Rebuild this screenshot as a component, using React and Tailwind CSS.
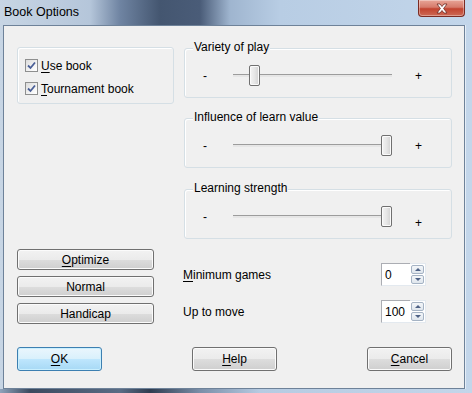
import React from 'react';

const U = ({ children, u }) => (
    <span>
        <span className="underline underline-offset-[2px]">{u}</span>
        {children}
    </span>
);

const Checkbox = ({ u, label }) => (
    <div className="flex items-center h-[13px]">
        <div className="w-[13px] h-[13px] border border-[#8e8f8f] bg-[linear-gradient(135deg,#dcdcdc_0%,#f7f7f7_70%,#ffffff_100%)] flex items-center justify-center">
            <svg width="9" height="9" viewBox="0 0 9 9">
                <path d="M1 4.5 L3.5 7 L8 1.5" fill="none" stroke="#4a5f97" strokeWidth="1.8" />
            </svg>
        </div>
        <span className="ml-[3px] text-[12px] leading-[14px]">
            <U u={u}>{label}</U>
        </span>
    </div>
);

const Slider = ({ title, pct, plusDrop = 0, className = '' }) => (
    <div className={`relative h-[50px] border border-[#d5dfe5] rounded-[3px] shadow-[inset_1px_1px_0_#ffffff] ${className}`}>
        <span className="absolute left-[8px] top-[-9px] px-[1px] bg-[#f0f0f0] text-[12px] leading-[14px]">{title}</span>
        <div className="flex items-center h-[21px] mt-[16px] pl-[18px]">
            <span className="w-[30px] text-[12px] leading-[14px]">-</span>
            <div className="relative w-[159px] h-[21px] flex items-center">
                <div className="w-full h-[3px] border-t border-[#9c9c9c] bg-[#e6e6e6]" />
                <div
                    className="absolute top-0 w-[11px] h-[21px] rounded-[2px] border border-[#707070] bg-[linear-gradient(90deg,#f4f4f4_0%,#e6e6e6_50%,#d2d2d2_100%)] shadow-[inset_0_0_0_1px_#fafafa]"
                    style={{ left: Math.round(pct * 148) }}
                />
            </div>
            <span className="ml-[23px] text-[12px] leading-[14px]" style={{ marginTop: plusDrop }}>+</span>
        </div>
    </div>
);

const Button = ({ children, className = '' }) => (
    <div className={`flex items-center justify-center rounded-[3px] border border-[#707070] bg-[linear-gradient(180deg,#f2f2f2_0%,#ebebeb_50%,#dddddd_51%,#cfcfcf_100%)] shadow-[inset_0_0_0_1px_#fbfbfb] text-[12px] leading-[14px] ${className}`}>
        {children}
    </div>
);

const Spin = ({ value }) => (
    <div className="flex h-[23px]">
        <div className="w-[29px] h-full bg-white border border-[#abadb3] border-r-0 border-b-[#e3e9ef] flex items-center pl-[3px] text-[12px] leading-[14px]">
            {value}
        </div>
        <div className="w-[16px] h-full flex flex-col bg-white border border-[#e3e9ef] border-l-0 p-[1px] gap-[1px]">
            {['M1 4 L4 1 L7 4 Z', 'M1 1 L4 4 L7 1 Z'].map((d, i) => (
                <div key={i} className="flex-1 rounded-[2px] border border-[#a5b3c4] bg-[linear-gradient(180deg,#f3f6f9_0%,#dfe6ed_100%)] flex items-center justify-center">
                    <svg width="8" height="5" viewBox="0 0 8 5">
                        <path d={d} fill="#4d6185" />
                    </svg>
                </div>
            ))}
        </div>
    </div>
);

const App = () => {
    return (
        <div className="w-[472px] h-[393px] overflow-hidden flex flex-col text-black font-['Liberation_Sans',Arial,sans-serif] bg-[linear-gradient(90deg,#c7d5e4_0px,#b5c6da_90px,#6f84a2_120px,#445670_160px,#4a5c78_200px,#9fb5cf_230px,#b8cde4_280px,#c3d6ea_472px)]">
            {/* title bar */}
            <div className="h-[25px] flex justify-between items-start">
                <span className="pl-[4px] pt-[5px] text-[12.5px] leading-[14px] text-black">Book Options</span>
                <div className="mr-[7px] w-[47px] h-[17px] rounded-b-[4px] border border-t-0 border-[#7b2b22] bg-[linear-gradient(180deg,#e8a597_0%,#d67b6b_45%,#c2432f_55%,#cd6a55_100%)] shadow-[inset_0_0_0_1px_rgba(255,255,255,0.35)] flex items-center justify-center">
                    <svg width="14" height="11" viewBox="0 0 14 11">
                        <path d="M2 1 L5 1 L7 3.5 L9 1 L12 1 L8.6 5.5 L12 10 L9 10 L7 7.5 L5 10 L2 10 L5.4 5.5 Z" fill="#ffffff" stroke="#6b2a22" strokeWidth="0.8" />
                    </svg>
                </div>
            </div>

            <div className="flex">
                <div className="w-[3px]" />
                {/* client area */}
                <div className="w-[462px] h-[364px] border border-[#6e8299] bg-[#f0f0f0]">
                    <div className="pl-[13px] pt-[21px]">
                        <div className="flex">
                            <div className="w-[157px]">
                                <div className="h-[57px] border border-[#d5dfe5] rounded-[3px] shadow-[inset_1px_1px_0_#ffffff] pl-[7px] pt-[11px] flex flex-col gap-[10px]">
                                    <Checkbox u="U" label="se book" />
                                    <Checkbox u="T" label="ournament book" />
                                </div>
                            </div>
                            <div className="ml-[10px] w-[268px] pt-[1px]">
                                <Slider title="Variety of play" pct={0.11} />
                                <Slider title="Influence of learn value" pct={1} className="mt-[20px]" />
                                <Slider title="Learning strength" pct={1} plusDrop={12} className="mt-[21px]" />
                            </div>
                        </div>

                        <div className="flex mt-[10px]">
                            <div className="w-[137px] flex flex-col gap-[6px]">
                                <Button className="h-[21px]"><U u="O">ptimize</U></Button>
                                <Button className="h-[21px]">Normal</Button>
                                <Button className="h-[21px]">Handicap</Button>
                            </div>
                            <div className="ml-[29px] w-[243px] pt-[14px] flex flex-col gap-[14px]">
                                <div className="flex items-center justify-between">
                                    <span className="text-[12px] leading-[14px]"><U u="M">inimum games</U></span>
                                    <Spin value="0" />
                                </div>
                                <div className="flex items-center justify-between">
                                    <span className="text-[12px] leading-[14px]">Up to move</span>
                                    <Spin value="100" />
                                </div>
                            </div>
                        </div>

                        <div className="w-[435px] flex justify-between mt-[23px]">
                            <div className="w-[85px] h-[24px] rounded-[3px] border border-[#3c7fb1] bg-[linear-gradient(180deg,#eaf6fd_0%,#d9f0fc_50%,#bee6fd_51%,#a7d9f5_100%)] shadow-[inset_0_0_0_1px_#c9effe] flex items-center justify-center text-[12px] leading-[14px]">
                                <U u="O">K</U>
                            </div>
                            <Button className="w-[85px] h-[24px]"><U u="H">elp</U></Button>
                            <Button className="w-[85px] h-[24px]"><U u="C">ancel</U></Button>
                        </div>
                    </div>
                </div>
                <div className="flex-1 border-l border-[#e6eef7]" />
            </div>
            <div className="flex-1 bg-[linear-gradient(90deg,#8fa3bb_0px,#3b4a5f_30px,#5a6c85_120px,#2f3c50_150px,#7a8ea8_200px,#b6cbe2_260px,#c3d6ea_472px)]" />
        </div>
    );
};

export default App;
